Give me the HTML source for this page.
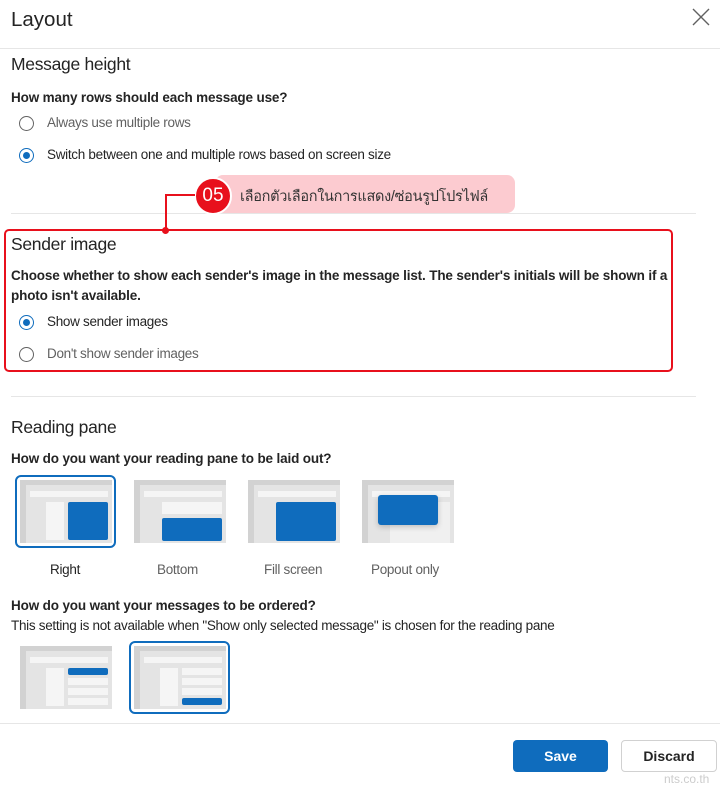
<!DOCTYPE html>
<html><head><meta charset="utf-8"><style>
body{margin:0;width:720px;height:784px;background:#fff;font-family:"Liberation Sans","Noto Sans CJK SC",sans-serif;color:#242424;position:relative;overflow:hidden}
.a{position:absolute;white-space:nowrap}
.h{font-size:17.5px;letter-spacing:-0.3px}
.b{font-size:13.5px;font-weight:bold;letter-spacing:-0.15px}
.t{font-size:13.5px;letter-spacing:-0.3px}
.g{color:#616161}
.hr{position:absolute;height:1px;background:#e6e6e6}
.r{position:absolute;width:13px;height:13px;border:1px solid #616161;border-radius:50%}
.r.on{border-color:#0f6cbd}
.r.on:after{content:"";position:absolute;left:3px;top:3px;width:7px;height:7px;border-radius:50%;background:#0f6cbd}
.th{position:absolute;width:92px;height:63px;background:#e4e4e4;border-left:6px solid #d2d2d2;box-sizing:border-box;border-top:5px solid #d2d2d2}
.th i{position:absolute;display:block}
.sel{position:absolute;width:97px;height:69px;border:2px solid #0f6cbd;border-radius:6px}
</style></head><body>
<div class="a" style="left:11px;top:8px;font-size:20.5px">Layout</div>
<svg class="a" style="left:692px;top:8px" width="18" height="18"><path d="M1 1L17 17M17 1L1 17" stroke="#616161" stroke-width="1.4"/></svg>
<div class="hr" style="left:0;top:48px;width:720px"></div>
<div class="a h" style="left:11px;top:54px">Message height</div>
<div class="a b" style="left:11px;top:90px">How many rows should each message use?</div>
<div class="r" style="left:19px;top:116px"></div><div class="a t g" style="left:47px;top:115px">Always use multiple rows</div>
<div class="r on" style="left:19px;top:148px"></div><div class="a t" style="left:47px;top:147px">Switch between one and multiple rows based on screen size</div>
<div class="hr" style="left:11px;top:213px;width:685px"></div>
<div class="a" style="left:215px;top:175px;width:300px;height:38px;background:#fccbd0;border-radius:8px"></div>
<div class="a" style="left:194px;top:177px;width:34px;height:34px;border-radius:50%;background:#e8101c;border:2px solid #fff;color:#fff;font-size:19px;line-height:34px;text-align:center">05</div>
<div class="a" style="left:240px;top:185px;font-size:14.5px;letter-spacing:-0.3px;color:#333;font-family:'Liberation Sans','Noto Sans CJK SC','WenQuanYi Zen Hei',sans-serif">เลือกตัวเลือกในการแสดง/ซ่อนรูปโปรไฟล์</div>
<div class="a" style="left:165px;top:194px;width:30px;height:2px;background:#e8101c"></div>
<div class="a" style="left:165px;top:194px;width:2px;height:36px;background:#e8101c"></div>
<div class="a" style="left:162px;top:227px;width:7px;height:7px;border-radius:50%;background:#e8101c"></div>
<div class="a" style="left:4px;top:229px;width:665px;height:139px;border:2px solid #e8101c;border-radius:5px"></div>
<div class="a h" style="left:11px;top:234px">Sender image</div>
<div class="a b" style="left:11px;top:268px">Choose whether to show each sender's image in the message list. The sender's initials will be shown if a</div>
<div class="a b" style="left:11px;top:288px">photo isn't available.</div>
<div class="r on" style="left:19px;top:315px"></div><div class="a t" style="left:47px;top:314px">Show sender images</div>
<div class="r" style="left:19px;top:347px"></div><div class="a t g" style="left:47px;top:346px">Don't show sender images</div>
<div class="hr" style="left:11px;top:396px;width:685px"></div>
<div class="a h" style="left:11px;top:417px">Reading pane</div>
<div class="a b" style="left:11px;top:451px">How do you want your reading pane to be laid out?</div>
<div class="sel" style="left:15px;top:475px"></div>
<div class="th" style="left:20px;top:480px"><i style="left:4px;top:6px;width:78px;height:6px;background:#f5f5f5"></i><i style="left:20px;top:17px;width:18px;height:38px;background:#f5f5f5"></i><i style="left:42px;top:17px;width:40px;height:38px;background:#0f6cbd;border-radius:2px"></i></div>
<div class="th" style="left:134px;top:480px"><i style="left:4px;top:6px;width:78px;height:6px;background:#f5f5f5"></i><i style="left:22px;top:17px;width:60px;height:12px;background:#f5f5f5"></i><i style="left:22px;top:33px;width:60px;height:23px;background:#0f6cbd;border-radius:2px"></i></div>
<div class="th" style="left:248px;top:480px"><i style="left:4px;top:6px;width:78px;height:6px;background:#f5f5f5"></i><i style="left:22px;top:17px;width:60px;height:39px;background:#0f6cbd;border-radius:2px"></i></div>
<div class="th" style="left:362px;top:480px"><i style="left:4px;top:6px;width:78px;height:6px;background:#f5f5f5"></i><i style="left:22px;top:17px;width:60px;height:41px;background:#f0f0f0"></i><i style="left:10px;top:10px;width:60px;height:30px;background:#0f6cbd;border-radius:3px;box-shadow:0 2px 6px rgba(0,0,0,.2)"></i></div>
<div class="a t" style="left:50px;top:562px">Right</div>
<div class="a t g" style="left:157px;top:562px">Bottom</div>
<div class="a t g" style="left:264px;top:562px">Fill screen</div>
<div class="a t g" style="left:371px;top:562px">Popout only</div>
<div class="a b" style="left:11px;top:598px">How do you want your messages to be ordered?</div>
<div class="a t" style="left:11px;top:618px">This setting is not available when "Show only selected message" is chosen for the reading pane</div>
<div class="th" style="left:20px;top:646px"><i style="left:4px;top:6px;width:78px;height:6px;background:#f5f5f5"></i><i style="left:20px;top:17px;width:18px;height:38px;background:#f5f5f5"></i><i style="left:42px;top:17px;width:40px;height:7px;background:#0f6cbd;border-radius:2px"></i><i style="left:42px;top:27px;width:40px;height:7px;background:#f5f5f5"></i><i style="left:42px;top:37px;width:40px;height:7px;background:#f5f5f5"></i><i style="left:42px;top:47px;width:40px;height:7px;background:#f5f5f5"></i></div>
<div class="sel" style="left:129px;top:641px"></div>
<div class="th" style="left:134px;top:646px"><i style="left:4px;top:6px;width:78px;height:6px;background:#f5f5f5"></i><i style="left:20px;top:17px;width:18px;height:38px;background:#f5f5f5"></i><i style="left:42px;top:17px;width:40px;height:7px;background:#f5f5f5"></i><i style="left:42px;top:27px;width:40px;height:7px;background:#f5f5f5"></i><i style="left:42px;top:37px;width:40px;height:7px;background:#f5f5f5"></i><i style="left:42px;top:47px;width:40px;height:7px;background:#0f6cbd;border-radius:2px"></i></div>
<div class="hr" style="left:0;top:723px;width:720px"></div>
<div class="a" style="left:513px;top:740px;width:95px;height:32px;background:#0f6cbd;border-radius:4px;color:#fff;font-size:14px;font-weight:bold;line-height:32px;text-align:center">Save</div>
<div class="a" style="left:621px;top:740px;width:94px;height:30px;border:1px solid #d1d1d1;border-radius:4px;font-size:14px;font-weight:bold;line-height:30px;text-align:center">Discard</div>
<div class="a" style="left:664px;top:772px;font-size:12px;color:#ccc">nts.co.th</div>
</body></html>
